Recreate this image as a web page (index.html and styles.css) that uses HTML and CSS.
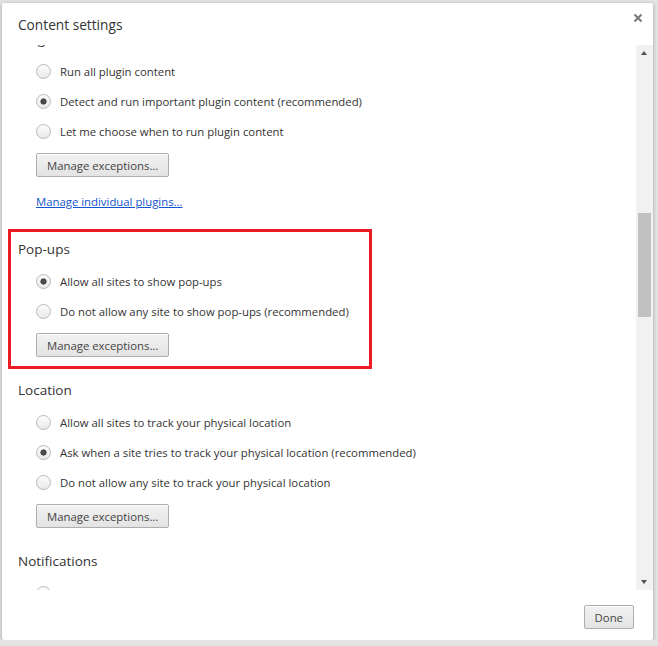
FILE: index.html
```html
<!DOCTYPE html>
<html lang="en">
    <head>
        <meta charset="UTF-8">
        <title>Content settings</title>
        <link rel="stylesheet" href="styles.css">
    </head>
    <body>
        <div class="dialog">
            <div class="header">
                <div class="title">Content settings</div>
                <svg class="close" width="10" height="10" viewBox="0 0 10 10">
                    <path d="M1.5 1.5L8.5 8.5M8.5 1.5L1.5 8.5" stroke="#777" stroke-width="2"/>
                </svg>
            </div>
            <div class="content">
                <div class="list">
                    <div class="section plugins">
                        <h3>Plug-ins</h3>
                        <label class="option"><input type="radio" name="plugins">Run all plugin content</label>
                        <label class="option"><input type="radio" name="plugins" checked>Detect and run important plugin content (recommended)</label>
                        <label class="option"><input type="radio" name="plugins">Let me choose when to run plugin content</label>
                        <button class="btn">Manage exceptions...</button>
                        <a class="link" href="#">Manage individual plugins...</a>
                    </div>
                    <div class="section marked">
                        <h3>Pop-ups</h3>
                        <label class="option"><input type="radio" name="popups" checked>Allow all sites to show pop-ups</label>
                        <label class="option"><input type="radio" name="popups">Do not allow any site to show pop-ups (recommended)</label>
                        <button class="btn">Manage exceptions...</button>
                    </div>
                    <div class="section">
                        <h3>Location</h3>
                        <label class="option"><input type="radio" name="location">Allow all sites to track your physical location</label>
                        <label class="option"><input type="radio" name="location" checked>Ask when a site tries to track your physical location (recommended)</label>
                        <label class="option"><input type="radio" name="location">Do not allow any site to track your physical location</label>
                        <button class="btn">Manage exceptions...</button>
                    </div>
                    <div class="section">
                        <h3>Notifications</h3>
                        <label class="option"><input type="radio" name="notify">Allow all sites to show notifications</label>
                        <label class="option"><input type="radio" name="notify" checked>Ask when a site wants to show notifications (recommended)</label>
                    </div>
                </div>
                <div class="scrollbar">
                    <div class="arrow up"></div>
                    <div class="track">
                        <div class="thumb"></div>
                    </div>
                    <div class="arrow down"></div>
                </div>
            </div>
            <div class="footer">
                <button class="btn done">Done</button>
            </div>
        </div>
    </body>
</html>
```

FILE: styles.css
```css
body {
    margin: 0;
    background: #e4e4e4;
    font-family: "Open Sans", "Liberation Sans", sans-serif;
    color: #333;
}

.dialog {
    display: flex;
    flex-direction: column;
    width: 651px;
    height: 637px;
    margin: 3px 0 0 2px;
    background: #fff;
    border-radius: 2px;
    box-shadow: 0 1px 4px 0 rgba(0, 0, 0, .3);
    overflow: hidden;
}

.header {
    display: flex;
    justify-content: space-between;
    align-items: flex-start;
    height: 42px;
    padding: 11px 10px 0 16px;
    box-sizing: border-box;
}

.title {
    font-size: 13.7px;
    line-height: 20px;
    margin-top: 1px;
}

.close {
    margin-top: -1px;
}

.content {
    display: flex;
    height: 545px;
}

.list {
    flex: 1;
    overflow: hidden;
    padding-left: 16px;
}

.section {
    margin-top: 23px;
}

.section h3 {
    margin: 0 0 7px;
    font-size: 13.5px;
    line-height: 20px;
    font-weight: normal;
}

.plugins {
    margin-top: -16px;
}

.marked {
    width: 364px;
    box-sizing: border-box;
    margin: 17px 0 -12px -10px;
    padding: 7px 0 9px 7px;
    border: 3px solid #ed1c24;
}

.option {
    display: flex;
    align-items: center;
    height: 30px;
    padding-left: 18px;
    font-size: 11.35px;
}

.option input {
    appearance: none;
    width: 15px;
    height: 15px;
    margin: 0 9px 0 0;
    border: 1px solid #b9b9b9;
    border-radius: 50%;
    background: linear-gradient(#fcfcfc, #e9e9e9);
    box-sizing: border-box;
}

.option input:checked {
    background: radial-gradient(circle, #4a4a4a 0, #4a4a4a 2.8px, transparent 3.4px), linear-gradient(#fcfcfc, #e9e9e9);
}

.btn {
    display: block;
    height: 24px;
    margin: 7px 0 0 18px;
    padding: 0 10px;
    font-family: inherit;
    font-size: 11.35px;
    color: #444;
    border: 1px solid #adadad;
    border-radius: 2px;
    background: linear-gradient(#f2f2f2, #e3e3e3);
    box-shadow: inset 0 1px 0 #fff;
}

.link {
    display: inline-block;
    margin: 15px 0 0 18px;
    font-size: 11.35px;
    line-height: 20px;
    color: #15c;
}

.scrollbar {
    display: flex;
    flex-direction: column;
    width: 17px;
    background: #f1f1f1;
}

.arrow {
    height: 17px;
    position: relative;
}

.arrow::after {
    content: '';
    position: absolute;
    left: 5px;
    border-left: 3.5px solid transparent;
    border-right: 3.5px solid transparent;
}

.up::after {
    top: 6px;
    border-bottom: 4px solid #505050;
}

.down::after {
    top: 7px;
    border-top: 4px solid #505050;
}

.track {
    flex: 1;
    padding-top: 151px;
}

.thumb {
    height: 104px;
    margin: 0 2px;
    background: #c1c1c1;
}

.footer {
    display: flex;
    justify-content: flex-end;
    padding: 15px 19px 0 0;
}

.done {
    margin: 0;
    min-width: 50px;
}
```
